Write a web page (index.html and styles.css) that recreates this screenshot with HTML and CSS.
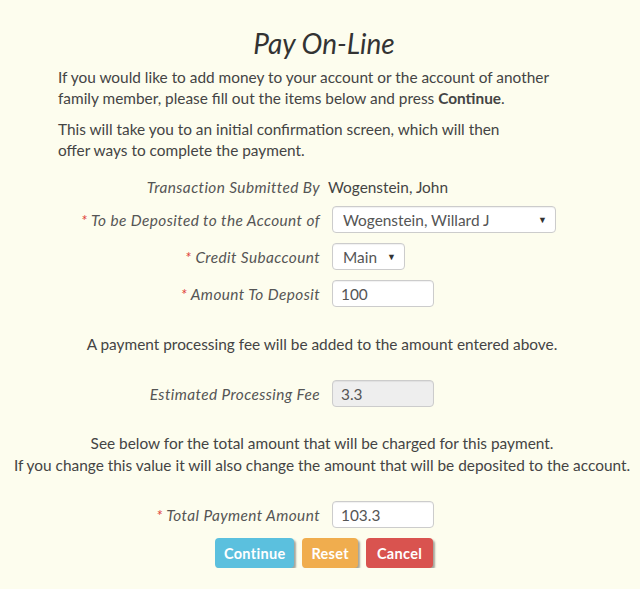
FILE: index.html
```html
<!DOCTYPE html>
<html lang="en">
<head>
    <meta charset="UTF-8">
    <meta name="viewport" content="width=device-width, initial-scale=1.0">
    <title>Pay On-Line</title>
    <link rel="stylesheet" href="styles.css">
</head>
<body>
    <h2 class="titulo">Pay On-Line</h2>
    <div class="intro">
        <p>If you would like to add money to your account or the account of another<br>
        family member, please fill out the items below and press <b>Continue</b>.</p>
        <p>This will take you to an initial confirmation screen, which will then<br>
        offer ways to complete the payment.</p>
    </div>

    <form id="payForm">
        <div class="linha">
            <label>Transaction Submitted By</label>
            <span class="valor">Wogenstein, John</span>
        </div>
        <div class="linha">
            <label for="conta"><span class="req">*</span> To be Deposited to the Account of</label>
            <div class="caixa larga">
                <select id="conta" name="conta">
                    <option>Wogenstein, Willard J</option>
                </select>
            </div>
        </div>
        <div class="linha">
            <label for="sub"><span class="req">*</span> Credit Subaccount</label>
            <div class="caixa curta">
                <select id="sub" name="sub">
                    <option>Main</option>
                </select>
            </div>
        </div>
        <div class="linha">
            <label for="valor"><span class="req">*</span> Amount To Deposit</label>
            <input type="text" id="valor" name="valor" value="100">
        </div>

        <p class="aviso primeiro">A payment processing fee will be added to the amount entered above.</p>

        <div class="linha">
            <label for="taxa">Estimated Processing Fee</label>
            <input type="text" id="taxa" name="taxa" value="3.3" readonly>
        </div>

        <p class="aviso">See below for the total amount that will be charged for this payment.<br>
        If you change this value it will also change the amount that will be deposited to the account.</p>

        <div class="linha">
            <label for="total"><span class="req">*</span> Total Payment Amount</label>
            <input type="text" id="total" name="total" value="103.3">
        </div>

        <div class="botoes">
            <button type="submit" class="btn azul">Continue</button>
            <button type="reset" class="btn laranja">Reset</button>
            <button type="button" class="btn vermelho">Cancel</button>
        </div>
    </form>
</body>
</html>
```

FILE: styles.css
```css
body {
    margin: 0;
    background-color: #fdfdee;
    font-family: Lato, "Noto Sans", sans-serif;
    font-size: 15.4px;
    color: #444;
}
.titulo {
    margin: 26px 0 0;
    text-align: center;
    font-size: 28px;
    font-weight: normal;
    font-style: italic;
    color: #333;
    padding-left: 8px;
}
.intro {
    padding-left: 58px;
    margin-top: 7px;
}
.intro p {
    margin: 0 0 10px;
    line-height: 21px;
}
form {
    margin-top: 17px;
}
.linha {
    display: grid;
    grid-template-columns: 320px auto;
    column-gap: 12px;
    align-items: center;
    margin-bottom: 10px;
}
.linha label {
    text-align: right;
    font-style: italic;
    color: #555;
    letter-spacing: 0.4px;
}
.req {
    color: #e0413a;
}
.valor {
    margin-left: -4px;
}
input[type="text"], select {
    font-family: inherit;
    font-size: 15.4px;
    color: #555;
    height: 27px;
    box-sizing: border-box;
    border: 1px solid #ccc;
    border-radius: 4px;
    background: #fff;
    padding: 0 8px;
    box-shadow: inset 0 1px 1px rgba(0,0,0,.06);
}
input[type="text"] {
    width: 102px;
}
input[readonly] {
    background: #eee;
}
.caixa {
    position: relative;
}
.caixa select {
    appearance: none;
    -webkit-appearance: none;
    width: 100%;
    padding-left: 10px;
}
.caixa::after {
    content: "\25BC";
    position: absolute;
    right: 9px;
    top: 8px;
    font-size: 9px;
    color: #333;
    pointer-events: none;
}
.larga {
    width: 224px;
}
.curta {
    width: 73px;
}
.aviso {
    text-align: center;
    margin: 25px 0 25px;
    line-height: 22px;
    padding-left: 4px;
}
.primeiro {
    margin-top: 26px;
    margin-bottom: 25px;
}
.botoes {
    display: flex;
    gap: 8px;
    padding-left: 215px;
    margin-top: 2px;
}
.btn {
    font-family: inherit;
    font-size: 14.5px;
    font-weight: bold;
    letter-spacing: 0.3px;
    color: white;
    border: none;
    border-radius: 4px;
    height: 30px;
    padding: 0 9px;
    box-shadow: 2px 2px 2px rgba(0,0,0,.35);
    cursor: pointer;
}
.azul {
    background-color: #5bc0de;
}
.laranja {
    background-color: #f0ad4e;
}
.vermelho {
    background-color: #d9534f;
    padding: 0 11px;
}
```
